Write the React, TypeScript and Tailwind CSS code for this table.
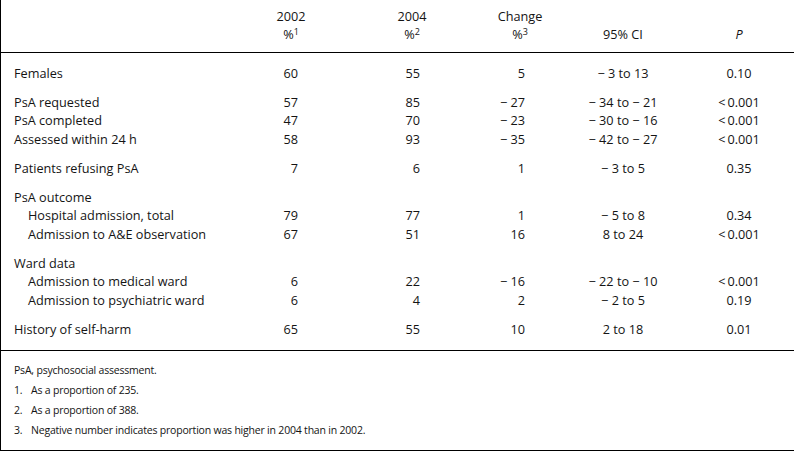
type Row = {
  label: string;
  indent?: boolean;
  a?: string;
  b?: string;
  change?: string;
  ci?: string;
  p?: string;
};

const M = '\u2212 ';
const LT = '<\u2009';

const groups: Row[][] = [
  [{ label: 'Females', a: '60', b: '55', change: '5', ci: `${M}3 to 13`, p: '0.10' }],
  [
    { label: 'PsA requested', a: '57', b: '85', change: `${M}27`, ci: `${M}34 to ${M}21`, p: `${LT}0.001` },
    { label: 'PsA completed', a: '47', b: '70', change: `${M}23`, ci: `${M}30 to ${M}16`, p: `${LT}0.001` },
    { label: 'Assessed within 24 h', a: '58', b: '93', change: `${M}35`, ci: `${M}42 to ${M}27`, p: `${LT}0.001` },
  ],
  [{ label: 'Patients refusing PsA', a: '7', b: '6', change: '1', ci: `${M}3 to 5`, p: '0.35' }],
  [
    { label: 'PsA outcome' },
    { label: 'Hospital admission, total', indent: true, a: '79', b: '77', change: '1', ci: `${M}5 to 8`, p: '0.34' },
    { label: 'Admission to A&E observation', indent: true, a: '67', b: '51', change: '16', ci: '8 to 24', p: `${LT}0.001` },
  ],
  [
    { label: 'Ward data' },
    { label: 'Admission to medical ward', indent: true, a: '6', b: '22', change: `${M}16`, ci: `${M}22 to ${M}10`, p: `${LT}0.001` },
    { label: 'Admission to psychiatric ward', indent: true, a: '6', b: '4', change: '2', ci: `${M}2 to 5`, p: '0.19' },
  ],
  [{ label: 'History of self-harm', a: '65', b: '55', change: '10', ci: '2 to 18', p: '0.01' }],
];

const notes = [
  { n: '1.', text: 'As a proportion of 235.' },
  { n: '2.', text: 'As a proportion of 388.' },
  { n: '3.', text: 'Negative number indicates proportion was higher in 2004 than in 2002.' },
];

function DataRow({ row }: { row: Row }) {
  return (
    <div className="flex h-[18.5px] items-center whitespace-nowrap">
      <div className={`w-[250px] ${row.indent ? 'pl-[27px]' : 'pl-[13px]'}`}>{row.label}</div>
      <div className="w-[80px] pr-[33px] text-right">{row.a}</div>
      <div className="ml-[41px] w-[80px] pr-[32px] text-right">{row.b}</div>
      <div className="ml-[28px] w-[80px] pr-[35px] text-right">{row.change}</div>
      <div className="ml-[23px] w-[80px] text-center">{row.ci}</div>
      <div className="ml-[36px] w-[80px] text-center">{row.p}</div>
    </div>
  );
}

export default function App() {
  return (
    <div
      className="h-[451px] w-[794px] bg-white text-[#141414]"
      style={{ fontFamily: '"Open Sans", "Noto Sans", sans-serif' }}
    >
      <div className="flex h-full flex-col border-b border-l border-black">
        {/* Header */}
        <div className="h-[53px] border-b border-black pt-[7px] text-[12.7px] leading-[18px]">
          <div className="flex whitespace-nowrap">
            <div className="w-[250px]" />
            <div className="flex w-[80px] flex-col items-center">
              <span>2002</span>
              <span>%<sup className="text-[9px]">1</sup></span>
            </div>
            <div className="ml-[41px] flex w-[80px] flex-col items-center">
              <span>2004</span>
              <span>%<sup className="text-[9px]">2</sup></span>
            </div>
            <div className="ml-[28px] flex w-[80px] flex-col items-center">
              <span>Change</span>
              <span>%<sup className="text-[9px]">3</sup></span>
            </div>
            <div className="ml-[23px] flex w-[80px] flex-col items-center">
              <span>&nbsp;</span>
              <span>95% CI</span>
            </div>
            <div className="ml-[36px] flex w-[80px] flex-col items-center">
              <span>&nbsp;</span>
              <span className="italic">P</span>
            </div>
          </div>
        </div>

        {/* Body */}
        <div className="flex flex-col gap-[10.5px] border-b border-black pt-[11px] pb-[11.5px] text-[12.7px]">
          {groups.map((g, i) => (
            <div key={i}>
              {g.map((r) => (
                <DataRow key={r.label} row={r} />
              ))}
            </div>
          ))}
        </div>

        {/* Footnotes */}
        <div className="pt-[9px] pl-[13px] text-[10.5px] leading-[20px] tracking-[-0.2px]">
          <div>PsA, psychosocial assessment.</div>
          {notes.map((f) => (
            <div key={f.n} className="flex">
              <span className="w-[17px]">{f.n}</span>
              <span>{f.text}</span>
            </div>
          ))}
        </div>
      </div>
    </div>
  );
}
